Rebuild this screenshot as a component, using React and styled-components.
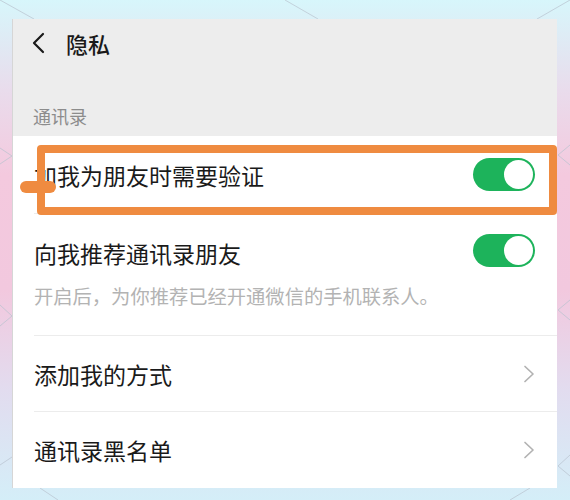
import styled, { createGlobalStyle } from "styled-components";

const GlobalStyle = createGlobalStyle`
    html, body {
        margin: 0;
        padding: 0;
    }
    body {
        font-family: "Noto Sans CJK SC", "Noto Sans", sans-serif;
    }
`;

const Page = styled.div`
    position: relative;
    width: 570px;
    height: 500px;
    overflow: hidden;
    box-sizing: border-box;
    padding: 19px 13px 12px 12px;
    background: linear-gradient(
        180deg,
        #d7f6fb 0%,
        #e9dcec 18%,
        #f4c9de 35%,
        #f2c8de 58%,
        #e2dcef 78%,
        #d4eef8 100%
    );
`;

const Pattern = styled.svg`
    position: absolute;
    inset: 0;
    width: 570px;
    height: 500px;
    pointer-events: none;
`;

const Screen = styled.div`
    position: relative;
    display: flex;
    flex-direction: column;
    height: 100%;
    background: #fff;
    border-left: 1px solid #d6d6d6;
    box-sizing: border-box;
`;

const Header = styled.div`
    background: #ededed;
`;

const NavBar = styled.div`
    display: flex;
    align-items: center;
    gap: 19px;
    height: 48px;
    padding-left: 18px;
`;

const Title = styled.div`
    font-size: 22px;
    font-weight: 500;
    color: #1a1a1a;
`;

const SectionLabel = styled.div`
    padding: 37px 20px 8px;
    font-size: 18px;
    line-height: 24px;
    color: #8c8c8c;
`;

const Row = styled.div`
    position: relative;
    display: flex;
    align-items: ${(p) => (p.$top ? "flex-start" : "center")};
    justify-content: space-between;
    height: ${(p) => p.$height}px;
    margin-left: 21px;
    padding-right: 22px;
    padding-top: ${(p) => (p.$top ? "24px" : "0")};
    box-sizing: border-box;
    border-bottom: ${(p) => (p.$last ? "none" : "1px solid #ececec")};
`;

const RowText = styled.div`
    display: flex;
    flex-direction: column;
    gap: 16px;
`;

const Label = styled.div`
    font-size: 23px;
    line-height: 30px;
    color: #1a1a1a;
`;

const Hint = styled.div`
    font-size: 19.3px;
    line-height: 24px;
    color: #b3b3b3;
    white-space: nowrap;
`;

const Toggle = styled.div`
    position: relative;
    flex: none;
    width: 62px;
    height: 33px;
    border-radius: 17px;
    background: #1db35b;
    margin-top: ${(p) => p.$offset || 0}px;

    &::after {
        content: "";
        position: absolute;
        top: 2px;
        right: 2px;
        width: 29px;
        height: 29px;
        border-radius: 50%;
        background: #fff;
    }
`;

const Highlight = styled.div`
    position: absolute;
    left: 3px;
    top: 9px;
    width: 520px;
    height: 70px;
    box-sizing: border-box;
    border: 8px solid #ef8b40;
    border-radius: 4px;
    pointer-events: none;
`;

const HighlightStub = styled.div`
    position: absolute;
    left: -14px;
    top: 45px;
    width: 36px;
    height: 12px;
    border-radius: 6px;
    background: #ef8b40;
`;

const BackIcon = () => (
    <svg width="16" height="22" viewBox="0 0 16 22">
        <path
            d="M12 2 L3 11 L12 20"
            fill="none"
            stroke="#1a1a1a"
            strokeWidth="2.2"
            strokeLinecap="round"
            strokeLinejoin="round"
        />
    </svg>
);

const Chevron = () => (
    <svg width="12" height="18" viewBox="0 0 12 18">
        <path
            d="M2 1.5 L10 9 L2 16.5"
            fill="none"
            stroke="#b2b2b2"
            strokeWidth="1.7"
            strokeLinecap="round"
            strokeLinejoin="round"
        />
    </svg>
);

const App = () => {
    return (
        <>
            <GlobalStyle />
            <Page>
                <Pattern viewBox="0 0 570 500">
                    <g stroke="#b9c3cf" strokeWidth="1" fill="none" opacity="0.7">
                        <path d="M0 0 L34 19" />
                        <path d="M285 0 L318 19" />
                        <path d="M537 19 L570 0" />
                        <path d="M0 148 L12 156 L0 164" />
                        <path d="M0 305 L12 316 L0 326" />
                        <path d="M570 145 L558 155 L570 165" />
                        <path d="M570 300 L558 310 L570 320" />
                        <path d="M570 455 L558 466 L570 476" />
                        <path d="M0 465 L12 457" />
                        <path d="M40 488 L58 500" />
                        <path d="M510 500 L530 488" />
                    </g>
                </Pattern>
                <Screen>
                    <Header>
                        <NavBar>
                            <BackIcon />
                            <Title>隐私</Title>
                        </NavBar>
                        <SectionLabel>通讯录</SectionLabel>
                    </Header>
                    <Row $height={78}>
                        <Label>加我为朋友时需要验证</Label>
                        <Toggle />
                        <Highlight />
                        <HighlightStub />
                    </Row>
                    <Row $height={122} $top>
                        <RowText>
                            <Label>向我推荐通讯录朋友</Label>
                            <Hint>开启后，为你推荐已经开通微信的手机联系人。</Hint>
                        </RowText>
                        <Toggle $offset={-4} />
                    </Row>
                    <Row $height={76}>
                        <Label>添加我的方式</Label>
                        <Chevron />
                    </Row>
                    <Row $height={76} $last>
                        <Label>通讯录黑名单</Label>
                        <Chevron />
                    </Row>
                </Screen>
            </Page>
        </>
    );
};

export default App;
